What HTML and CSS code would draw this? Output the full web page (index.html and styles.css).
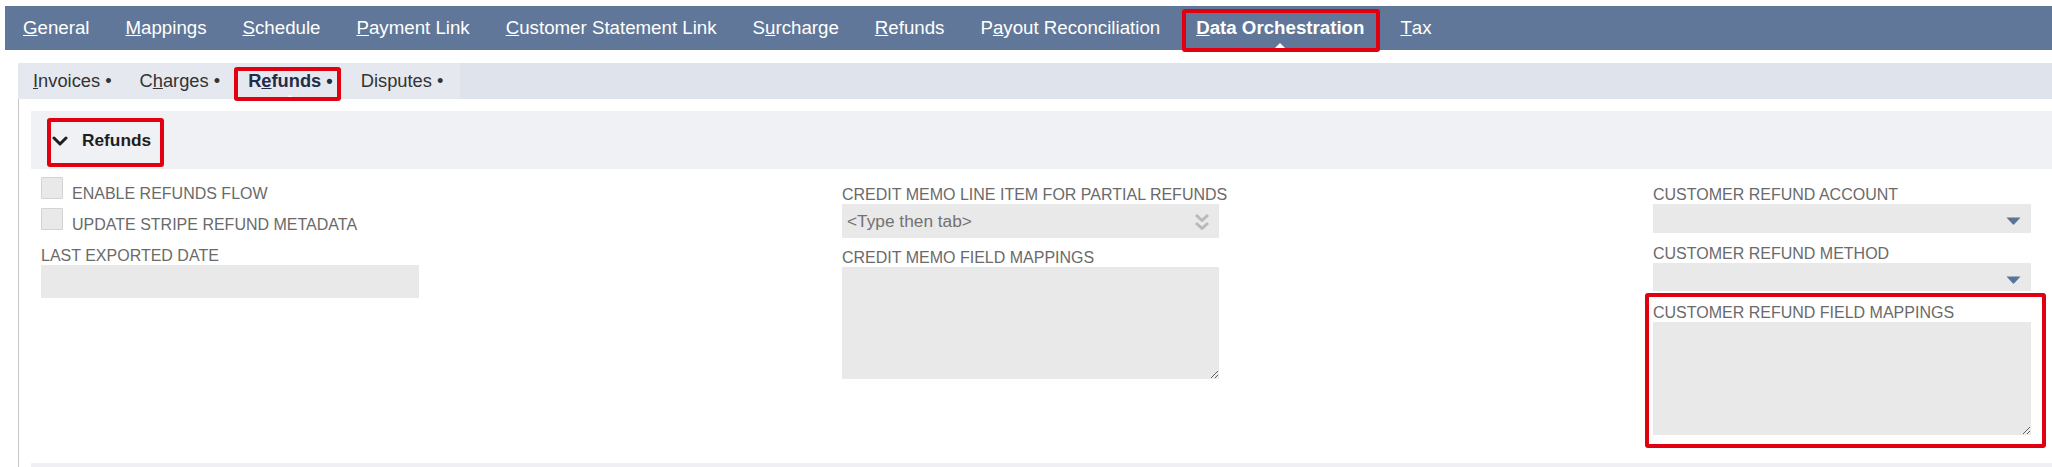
FILE: index.html
```html
<!DOCTYPE html>
<html>
<head>
<meta charset="utf-8">
<title>Data Orchestration - Refunds</title>
<link rel="stylesheet" href="styles.css">
</head>
<body>
<nav class="tabs">
  <a class="tab"><u>G</u>eneral</a>
  <a class="tab"><u>M</u>appings</a>
  <a class="tab"><u>S</u>chedule</a>
  <a class="tab"><u>P</u>ayment Link</a>
  <a class="tab"><u>C</u>ustomer Statement Link</a>
  <a class="tab">S<u>u</u>rcharge</a>
  <a class="tab"><u>R</u>efunds</a>
  <a class="tab">P<u>a</u>yout Reconciliation</a>
  <a class="tab tab-active"><u>D</u>ata Orchestration<span class="caret caret-nav"></span><span class="mark mark-nav"></span></a>
  <a class="tab"><u>T</u>ax</a>
</nav>

<div class="subtabs">
  <div class="subtab-list">
    <a class="subtab"><u>I</u>nvoices •</a>
    <a class="subtab">C<u>h</u>arges •</a>
    <a class="subtab subtab-active">R<u>e</u>funds •<span class="caret caret-sub"></span><span class="mark mark-sub"></span></a>
    <a class="subtab">Disputes •</a>
  </div>
</div>

<div class="panel">
  <div class="section-head">
    <svg class="chev" width="16" height="10" viewBox="0 0 16 10"><path d="M2 2 L8 8 L14 2" fill="none" stroke="#1e1e1e" stroke-width="3" stroke-linecap="round" stroke-linejoin="round"/></svg>
    <span class="section-title">Refunds</span>
    <span class="mark mark-head"></span>
  </div>

  <div class="fields">
    <div class="col col-left">
      <div class="check-row"><span class="checkbox"></span><span class="label">ENABLE REFUNDS FLOW</span></div>
      <div class="check-row"><span class="checkbox"></span><span class="label">UPDATE STRIPE REFUND METADATA</span></div>
      <div class="field field-date">
        <div class="label">LAST EXPORTED DATE</div>
        <div class="input input-date"></div>
      </div>
    </div>

    <div class="col col-mid">
      <div class="field">
        <div class="label">CREDIT MEMO LINE ITEM FOR PARTIAL REFUNDS</div>
        <div class="input input-type">
          <span class="placeholder">&lt;Type then tab&gt;</span>
          <svg class="dbl-chev" width="16" height="18" viewBox="0 0 16 18"><path d="M2 2 L8 7.5 L14 2 M2 10 L8 15.5 L14 10" fill="none" stroke="#b9b9b9" stroke-width="3" stroke-linejoin="round"/></svg>
        </div>
      </div>
      <div class="field field-gap-11">
        <div class="label">CREDIT MEMO FIELD MAPPINGS</div>
        <textarea class="textarea textarea-mid"></textarea>
      </div>
    </div>

    <div class="col col-right">
      <div class="field">
        <div class="label">CUSTOMER REFUND ACCOUNT</div>
        <div class="input input-select select-a">
          <svg class="arrow" width="15" height="8" viewBox="0 0 15 8"><path d="M0.5 0.5 L14.5 0.5 L8.3 7.3 Q7.5 8 6.7 7.3 Z" fill="#5a7498"/></svg>
        </div>
      </div>
      <div class="field field-gap-12">
        <div class="label">CUSTOMER REFUND METHOD</div>
        <div class="input input-select select-b">
          <svg class="arrow" width="15" height="8" viewBox="0 0 15 8"><path d="M0.5 0.5 L14.5 0.5 L8.3 7.3 Q7.5 8 6.7 7.3 Z" fill="#5a7498"/></svg>
        </div>
      </div>
      <div class="field field-gap-13 field-marked">
        <div class="label">CUSTOMER REFUND FIELD MAPPINGS</div>
        <textarea class="textarea textarea-right"></textarea>
        <span class="mark mark-field"></span>
      </div>
    </div>
  </div>

  <div class="section-head section-next"></div>
</div>
</body>
</html>
```

FILE: styles.css
```css
html, body {
  margin: 0;
  padding: 0;
  background: #ffffff;
  overflow: hidden;
}

body {
  font-family: "Liberation Sans", Arial, sans-serif;
  color: #333333;
  width: 2052px;
  height: 467px;
}

/* ---------- main tabs ---------- */
.tabs {
  display: flex;
  align-items: center;
  height: 44px;
  margin: 6px 0 0 5px;
  background: #607799;
}

.tab {
  position: relative;
  display: flex;
  align-items: center;
  height: 100%;
  padding: 0 18px;
  font-size: 18.7px;
  color: #ffffff;
  white-space: nowrap;
}

.tab-active {
  font-weight: bold;
}

.caret {
  position: absolute;
  left: 50%;
  bottom: 0;
  width: 0;
  height: 0;
  border-style: solid;
  border-color: transparent transparent #ffffff transparent;
}

.caret-nav {
  margin-left: -7px;
  border-width: 0 7px 7px 7px;
}

/* red annotation boxes */
.mark {
  position: absolute;
  border: 4px solid #e10010;
  border-radius: 3px;
  pointer-events: none;
}

.mark-nav {
  left: 4px;
  right: 2px;
  top: 3px;
  bottom: -2px;
}

/* ---------- sub tabs ---------- */
.subtabs {
  display: flex;
  height: 36px;
  margin: 13px 0 0 18px;
  background: #dfe4ec;
}

.subtab-list {
  display: flex;
  align-items: center;
  padding: 0 3px 0 1px;
  background: #e5e9ef;
}

.subtab {
  position: relative;
  display: flex;
  align-items: center;
  height: 100%;
  padding: 0 14px;
  font-size: 18.3px;
  color: #333333;
  white-space: nowrap;
}

.subtab-active {
  font-weight: bold;
  color: #1f2d4a;
}

.caret-sub {
  margin-left: -5px;
  border-width: 0 5px 4px 5px;
}

.mark-sub {
  left: 0;
  right: 6px;
  top: 4px;
  bottom: -2px;
}

/* ---------- panel ---------- */
.panel {
  margin: 0 0 0 18px;
  padding: 12px 0 0 12px;
  border-left: 1px solid #c6c6c6;
}

.section-head {
  position: relative;
  display: flex;
  align-items: center;
  gap: 14px;
  height: 58px;
  padding-left: 21px;
  background: #eff1f5;
}

.chev {
  display: block;
  margin-top: 1px;
}

.section-title {
  font-size: 17.3px;
  font-weight: bold;
  color: #1e1e1e;
}

.mark-head {
  left: 16px;
  top: 7px;
  width: 109px;
  height: 41px;
}

.section-next {
  margin-top: 28px;
  background: #f0f0f4;
}

/* ---------- fields ---------- */
.fields {
  display: grid;
  grid-template-columns: 801px 811px 378px;
  padding: 8px 0 0 10px;
}

.col {
  display: flex;
  flex-direction: column;
}

.col-mid,
.col-right {
  padding-top: 9px;
}

.label {
  font-size: 16px;
  line-height: 18px;
  color: #6a6a6a;
  white-space: nowrap;
}

.check-row {
  display: flex;
  align-items: flex-start;
  height: 26px;
  margin-bottom: 5px;
}

.checkbox {
  box-sizing: border-box;
  width: 22px;
  height: 22px;
  background: #e9e9e9;
  border: 1px solid #d3d3d3;
  border-radius: 1px;
}

.check-row .label {
  margin: 8px 0 0 9px;
}

.field {
  position: relative;
  display: flex;
  flex-direction: column;
}

.field-date {
  margin-top: 8px;
}

.field-gap-11 { margin-top: 11px; }
.field-gap-12 { margin-top: 12px; }
.field-gap-13 { margin-top: 13px; }

.input {
  box-sizing: border-box;
  width: 378px;
  background: #e9e9e9;
}

.input-date {
  height: 33px;
}

.input-type {
  display: flex;
  align-items: center;
  justify-content: space-between;
  width: 377px;
  height: 34px;
  padding: 0 9px 0 5px;
}

.placeholder {
  font-size: 17.3px;
  color: #727272;
}

.dbl-chev {
  display: block;
  margin-top: 2px;
}

.input-select {
  display: flex;
  align-items: center;
  justify-content: flex-end;
  padding: 5px 10px 0 0;
}

.select-a { height: 29px; }
.select-b { height: 28px; }

.arrow {
  display: block;
}

.textarea {
  display: block;
  box-sizing: border-box;
  margin: 0;
  padding: 4px;
  border: none;
  outline: none;
  border-radius: 0;
  background: #e9e9e9;
  font-family: "Liberation Sans", Arial, sans-serif;
}

.textarea-mid {
  width: 377px;
  height: 112px;
}

.textarea-right {
  width: 378px;
  height: 113px;
}

.mark-field {
  left: -8px;
  right: -15px;
  top: -11px;
  bottom: -13px;
}
```
